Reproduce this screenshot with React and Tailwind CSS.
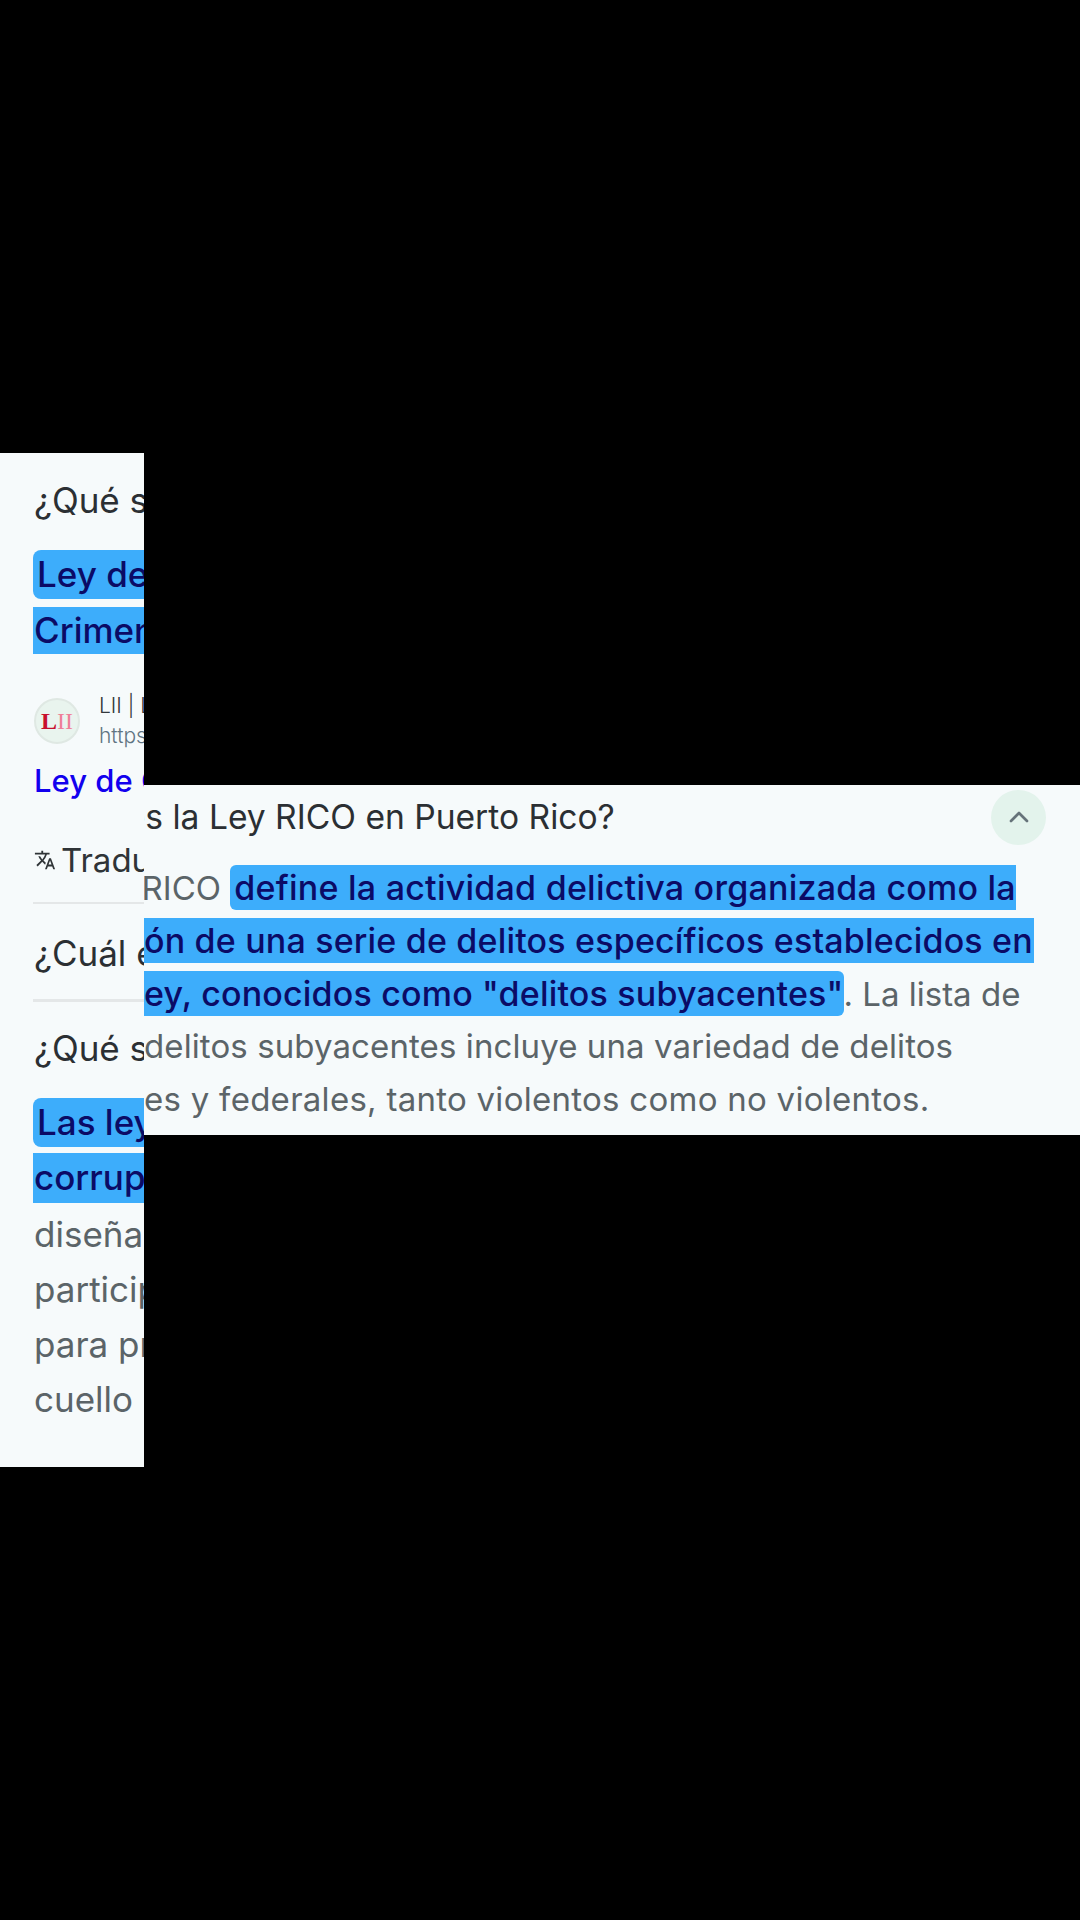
import React from 'react';
import { ChevronUp } from 'lucide-react';
import { MdTranslate } from 'react-icons/md';

const FONT = "font-['Inter','Noto_Sans',sans-serif]";
const HL = 'bg-[#3dadfb] text-[#0b0b66] font-medium';

const LeftPanel = () => (
  <div className={`w-[144px] h-[1014px] mt-[453px] shrink-0 overflow-hidden bg-[#f6fafb] text-[35px] whitespace-nowrap ${FONT}`}>
    <div className="h-[97px] pl-[34px] pt-[24px] leading-[46px] text-[#2b2f33]">¿Qué son las leyes RICO?</div>
    <div className={`ml-[33px] h-[49px] pl-[4px] leading-[48px] rounded-l-[8px] ${HL}`}>Ley de Organizaciones</div>
    <div className={`ml-[33px] mt-[8px] h-[47px] pl-[1px] leading-[46px] ${HL}`}>Crimen Organizado</div>
    <div className="flex items-center h-[46px] mt-[44px] pl-[34px]">
      <div className="w-[46px] h-[46px] shrink-0 rounded-full bg-[#e9f4ee] border-2 border-[#dfe8e3] flex items-center justify-center font-['Liberation_Serif',serif] text-[24px] leading-none">
        <span className="font-bold text-[#c8102e]">L</span><span className="text-[#ef7f97]">II</span>
      </div>
      <div className="ml-[19px] text-[21px] font-light">
        <div className="leading-[24px] text-[#33383c]">LII | Legal</div>
        <div className="leading-[24px] mt-[6px] text-[#5f7482]">https://www</div>
      </div>
    </div>
    <div className="mt-[15px] pl-[34px] h-[44px] leading-[44px] text-[31px] font-medium text-[#1200ee]">Ley de Crimen</div>
    <div className="flex items-center mt-[35px] pl-[34px] h-[44px] text-[#2f3437]">
      <MdTranslate className="w-[22px] h-[22px] shrink-0" />
      <span className="ml-[5px] text-[33px] leading-[44px]">Traducido</span>
    </div>
    <div className="ml-[33px] mt-[20px] h-[2px] bg-[#e4e7e8]" />
    <div className="mt-[26px] pl-[34px] h-[46px] leading-[46px] text-[#2b2f33]">¿Cuál es la Ley?</div>
    <div className="ml-[33px] mt-[23px] h-[3px] bg-[#e4e7e8]" />
    <div className="mt-[23px] pl-[34px] h-[46px] leading-[46px] text-[#2b2f33]">¿Qué son?</div>
    <div className={`ml-[33px] mt-[27px] h-[49px] pl-[4px] leading-[48px] rounded-l-[8px] ${HL}`}>Las leyes</div>
    <div className={`ml-[33px] mt-[6px] h-[50px] pl-[1px] leading-[48px] ${HL}`}>corrupción</div>
    <div className="pl-[34px] text-[#5b6468] leading-[55px] mt-[4px]">
      <div>diseñadas</div>
      <div>participan</div>
      <div>para proteger</div>
      <div>cuello blanco</div>
    </div>
  </div>
);

const OverlayPanel = () => (
  <div className={`w-[936px] h-[350px] mt-[785px] shrink-0 overflow-hidden bg-[#f6fafb] whitespace-nowrap text-[33px] ${FONT}`}>
    <div className="flex items-center justify-between h-[64px] pr-[34px]">
      <div className="-ml-[110px] text-[33.6px] leading-[64px] text-[#2b2f33]">¿Qué es la Ley RICO en Puerto Rico?</div>
      <div className="w-[55px] h-[55px] rounded-full bg-[#e3f3ec] flex items-center justify-center">
        <ChevronUp className="w-[32px] h-[32px] text-[#66737a]" strokeWidth={2} />
      </div>
    </div>
    <div className="mt-[16px] text-[#5b6468] leading-[45px] h-[45px] -ml-[114px]">
      La Ley RICO <span className={`inline-block rounded-l-[6px] pl-[4px] text-[34px] tracking-[0.24px] ${HL}`}>define la actividad delictiva organizada como la</span>
    </div>
    <div className="mt-[8px] leading-[45px] h-[45px] flex">
      <span className={`inline-block pr-[1px] text-[34px] tracking-[0.18px] ${HL}`}>ón de una serie de delitos específicos establecidos en</span>
    </div>
    <div className="mt-[8px] leading-[45px] h-[45px] text-[#5b6468]">
      <span className={`inline-block rounded-r-[6px] text-[34px] tracking-[0.18px] ${HL}`}>ey, conocidos como "delitos subyacentes"</span>. La lista de
    </div>
    <div className="mt-[8px] leading-[45px] h-[45px] text-[#5b6468] tracking-[0.1px]">delitos subyacentes incluye una variedad de delitos</div>
    <div className="mt-[8px] leading-[45px] h-[45px] text-[#5b6468] tracking-[0.27px]">es y federales, tanto violentos como no violentos.</div>
  </div>
);

export default function App() {
  return (
    <div className="flex w-[1080px] h-[1920px] bg-black overflow-hidden">
      <LeftPanel />
      <OverlayPanel />
    </div>
  );
}
